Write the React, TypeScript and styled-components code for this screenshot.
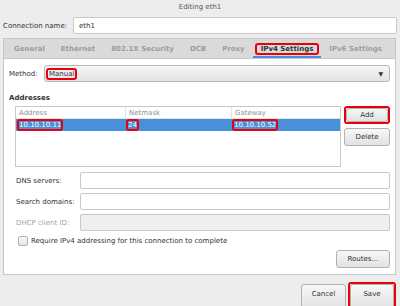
import React from 'react';
import styled, { createGlobalStyle, css } from 'styled-components';

const GlobalStyle = createGlobalStyle`
  html, body { margin: 0; padding: 0; background: #ededed; }
  * { box-sizing: border-box; }
`;

const Window = styled.div`
  width: 400px;
  height: 306px;
  overflow: hidden;
  display: flex;
  flex-direction: column;
  background: #ededed;
  font-family: 'DejaVu Sans', sans-serif;
  font-size: 7px;
  color: #2e3436;
  white-space: nowrap;
`;

const TitleBar = styled.div`
  height: 14px;
  flex-shrink: 0;
  display: flex;
  align-items: center;
  justify-content: center;
  color: #555753;
`;

const ConnRow = styled.div`
  display: flex;
  flex-shrink: 0;
  align-items: center;
  height: 17px;
  margin: 3px 3px 0 3px;
`;

const ConnLabel = styled.span`
  width: 70px;
`;

const TextInput = styled.div<{ $disabled?: boolean }>`
  flex: 1;
  height: 100%;
  display: flex;
  align-items: center;
  padding: 0 5px;
  border: 1px solid #cdc7c2;
  border-radius: 2px;
  background: ${p => (p.$disabled ? '#efefef' : '#fff')};
`;

const Notebook = styled.div`
  margin: 4px 4px 0 3px;
  height: 237px;
  flex-shrink: 0;
  border: 1px solid #c6c6c6;
  background: #fff;
  display: flex;
  flex-direction: column;
`;

const TabBar = styled.div`
  height: 20px;
  display: flex;
  padding-left: 2px;
  background: #dadada;
  border-bottom: 1px solid #c6c6c6;
`;

const Tab = styled.div<{ $active?: boolean }>`
  display: flex;
  align-items: center;
  padding: 0 8px;
  font-weight: bold;
  color: ${p => (p.$active ? '#2e3436' : '#9d9d9d')};
  ${p =>
    p.$active &&
    css`
      box-shadow: inset 0 -2px 0 #4a90d9;
      padding: 0 2px;
    `}
`;

const Mark = styled.span<{ $pad?: number }>`
  display: inline-flex;
  align-items: center;
  border: 2px solid #e8000b;
  border-radius: 3px;
  padding: 0 ${p => p.$pad ?? 0}px;
`;

const Page = styled.div`
  flex: 1;
  display: flex;
  flex-direction: column;
  padding: 6px 5px 0 5px;
`;

const MethodRow = styled.div`
  display: flex;
  align-items: center;
  height: 17px;
`;

const MethodLabel = styled.span`
  width: 35px;
`;

const Combo = styled.div`
  flex: 1;
  height: 100%;
  display: flex;
  align-items: center;
  justify-content: space-between;
  padding: 0 6px 0 1px;
  border: 1px solid #bfb8b1;
  border-radius: 3px;
  background: linear-gradient(#f6f6f6, #e3e3e3);
`;

const Arrow = styled.span`
  font-size: 6px;
  color: #2e3436;
`;

const SectionTitle = styled.div`
  font-weight: bold;
  margin: 12px 0 4px 0;
`;

const AddrArea = styled.div`
  display: flex;
  gap: 3px;
  padding-left: 6px;
`;

const Table = styled.div`
  flex: 1;
  height: 61px;
  border: 1px solid #cdc7c2;
  background: #fff;
`;

const TableRow = styled.div<{ $head?: boolean; $selected?: boolean }>`
  display: grid;
  grid-template-columns: 109px 106px 1fr;
  height: 12px;
  background: ${p => (p.$selected ? '#4a90d9' : 'transparent')};
  color: ${p => (p.$head ? '#8e9193' : p.$selected ? '#fff' : '#2e3436')};
  border-bottom: ${p => (p.$head ? '1px solid #e2e2e2' : 'none')};
`;

const Cell = styled.div<{ $head?: boolean }>`
  display: flex;
  align-items: center;
  padding-left: ${p => (p.$head ? 3 : 1)}px;
  border-left: ${p => (p.$head ? '1px solid #e2e2e2' : 'none')};
  &:first-child {
    border-left: none;
  }
`;

const ButtonCol = styled.div`
  width: 46px;
  display: flex;
  flex-direction: column;
  gap: 4px;
`;

const Button = styled.div<{ $w?: number; $h?: number }>`
  width: ${p => (p.$w ? `${p.$w}px` : '100%')};
  height: ${p => p.$h ?? 17}px;
  flex-shrink: 0;
  display: flex;
  align-items: center;
  justify-content: center;
  border: 1px solid #b6b0aa;
  border-radius: 3px;
  background: linear-gradient(#f7f7f7, #e2e2e2);
  color: #2e3436;
`;

const FooterButton = styled(Button)`
  padding-bottom: 6px;
`;

const ButtonMark = styled.div<{ $off?: boolean }>`
  border: 2px solid ${p => (p.$off ? 'transparent' : '#e8000b')};
  border-radius: 3px;
  display: flex;
  flex-shrink: 0;
`;

const FormGrid = styled.div`
  display: grid;
  grid-template-columns: 64px 1fr;
  row-gap: 4px;
  margin: 5px 0 0 7px;
`;

const FieldLabel = styled.div<{ $disabled?: boolean }>`
  display: flex;
  align-items: center;
  height: 17px;
  color: ${p => (p.$disabled ? '#a0a3a1' : '#2e3436')};
`;

const CheckRow = styled.div`
  display: flex;
  align-items: center;
  gap: 3px;
  margin: 5px 0 0 9px;
`;

const CheckBox = styled.span`
  width: 10px;
  height: 10px;
  border: 1px solid #b6b0aa;
  border-radius: 2px;
  background: linear-gradient(#fafafa, #e4e4e4);
`;

const RoutesRow = styled.div`
  display: flex;
  justify-content: flex-end;
  margin-top: 4px;
`;

const Footer = styled.div`
  flex: 1;
  min-height: 0;
  display: flex;
  justify-content: flex-end;
  align-items: flex-start;
  padding: 7px 4px 0 0;
`;

export default function App() {
  return (
    <Window>
      <GlobalStyle />
      <TitleBar>Editing eth1</TitleBar>
      <ConnRow>
        <ConnLabel>Connection name:</ConnLabel>
        <TextInput>eth1</TextInput>
      </ConnRow>
      <Notebook>
        <TabBar>
          <Tab>General</Tab>
          <Tab>Ethernet</Tab>
          <Tab>802.1X Security</Tab>
          <Tab>DCB</Tab>
          <Tab>Proxy</Tab>
          <Tab $active>
            <Mark $pad={4}>IPv4 Settings</Mark>
          </Tab>
          <Tab>IPv6 Settings</Tab>
        </TabBar>
        <Page>
          <MethodRow>
            <MethodLabel>Method:</MethodLabel>
            <Combo>
              <Mark $pad={1}>Manual</Mark>
              <Arrow>▼</Arrow>
            </Combo>
          </MethodRow>
          <SectionTitle>Addresses</SectionTitle>
          <AddrArea>
            <Table>
              <TableRow $head>
                <Cell $head>Address</Cell>
                <Cell $head>Netmask</Cell>
                <Cell $head>Gateway</Cell>
              </TableRow>
              <TableRow $selected>
                <Cell>
                  <Mark>10.10.10.11</Mark>
                </Cell>
                <Cell>
                  <Mark>24</Mark>
                </Cell>
                <Cell>
                  <Mark>10.10.10.52</Mark>
                </Cell>
              </TableRow>
            </Table>
            <ButtonCol>
              <ButtonMark>
                <Button $h={14}>Add</Button>
              </ButtonMark>
              <Button $h={18}>Delete</Button>
            </ButtonCol>
          </AddrArea>
          <FormGrid>
            <FieldLabel>DNS servers:</FieldLabel>
            <TextInput />
            <FieldLabel>Search domains:</FieldLabel>
            <TextInput />
            <FieldLabel $disabled>DHCP client ID:</FieldLabel>
            <TextInput $disabled />
          </FormGrid>
          <CheckRow>
            <CheckBox />
            <span>Require IPv4 addressing for this connection to complete</span>
          </CheckRow>
          <RoutesRow>
            <Button $w={54} $h={18}>Routes…</Button>
          </RoutesRow>
        </Page>
      </Notebook>
      <Footer>
        <ButtonMark $off>
          <FooterButton $w={45} $h={26}>Cancel</FooterButton>
        </ButtonMark>
        <ButtonMark>
          <FooterButton $w={44} $h={26}>Save</FooterButton>
        </ButtonMark>
      </Footer>
    </Window>
  );
}
